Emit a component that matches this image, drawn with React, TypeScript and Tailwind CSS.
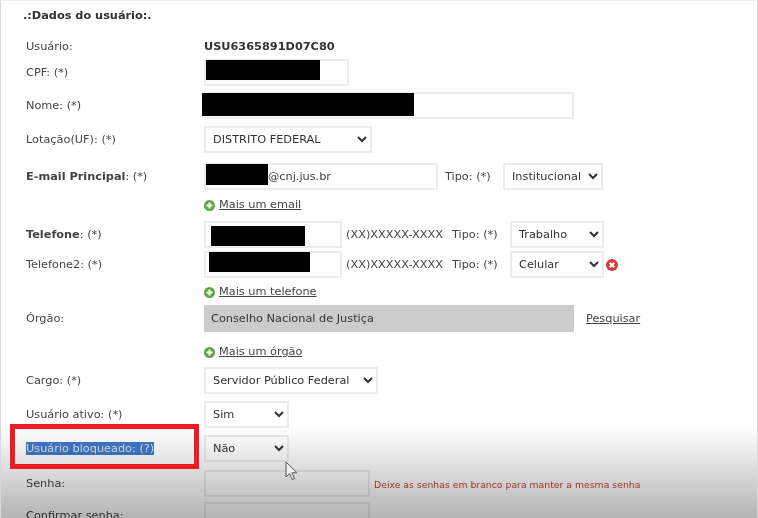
import type { ReactNode } from "react";

const fieldBorder = "border-2 border-[#ececec]";

function Row({ label, className, children }: { label?: ReactNode; className: string; children?: ReactNode }) {
  return (
    <div className={`flex items-center ${className}`}>
      <div className="w-[178px] shrink-0 pt-[2px]">{label}</div>
      {children}
    </div>
  );
}

function Field({ className, children }: { className: string; children?: ReactNode }) {
  return <div className={`relative h-[27px] ${fieldBorder} ${className}`}>{children}</div>;
}

function Select({ value, className }: { value: string; className: string }) {
  return (
    <select
      defaultValue={value}
      className={`h-[27px] ${fieldBorder} bg-white pl-[3px] text-[#333] ${className}`}
    >
      <option>{value}</option>
    </select>
  );
}

function AddLink({ text }: { text: string }) {
  return (
    <span className="flex items-center gap-[4px]">
      <svg width="11" height="11" viewBox="0 0 11 11">
        <circle cx="5.5" cy="5.5" r="5.5" fill="#5da642" />
        <path d="M5.5 2.5v6M2.5 5.5h6" stroke="#fff" strokeWidth="2" />
      </svg>
      <span className="underline">{text}</span>
    </span>
  );
}

const Mask = ({ className }: { className: string }) => <div className={`absolute bg-black ${className}`} />;

export default function App() {
  return (
    <div className="relative h-[518px] w-[758px] overflow-hidden border-x border-t border-x-[#d8d8d8] border-t-[#eef0f5] bg-white font-['DejaVu_Sans',sans-serif] text-[11.3px] text-[#444] blur-[0.3px]">
      <h2 className="ml-[22px] h-[31px] pt-[7px] font-bold leading-[16px] text-[#333]">.:Dados do usuário:.</h2>

      <div className="pl-[25px]">
        <Row label="Usuário:" className="mt-[4px] h-[20px]">
          <b className="pt-[2px] text-[#333]">USU6365891D07C80</b>
        </Row>
        <Row label="CPF: (*)" className="mt-[3px] h-[27px]">
          <Field className="w-[145px]">
            <Mask className="left-0 top-[-1px] h-[20px] w-[114px]" />
          </Field>
        </Row>
        <Row label="Nome: (*)" className="mt-[6px] h-[27px]">
          <Field className="w-[370px]">
            <Mask className="left-[-4px] top-[-1px] h-[23px] w-[212px]" />
          </Field>
        </Row>
        <Row label="Lotação(UF): (*)" className="mt-[7px] h-[27px]">
          <Select value="DISTRITO FEDERAL" className="w-[168px]" />
        </Row>
        <Row label={<><b>E-mail Principal</b>: (*)</>} className="mt-[10px] h-[27px]">
          <Field className="flex w-[234px] items-center pl-[62px]">
            <Mask className="left-0 top-[-1px] h-[21px] w-[62px]" />
            <span className="pt-[1px]">@cnj.jus.br</span>
          </Field>
          <span className="ml-[7px] w-[58px] pt-[2px]">Tipo: (*)</span>
          <Select value="Institucional" className="w-[100px]" />
        </Row>
        <Row className="mt-[6px] h-[18px]">
          <AddLink text="Mais um email" />
        </Row>
        <Row label={<><b>Telefone</b>: (*)</>} className="mt-[7px] h-[27px]">
          <Field className="w-[138px]">
            <Mask className="left-[5px] top-[3px] h-[20px] w-[94px]" />
          </Field>
          <span className="ml-[4px] w-[106px] pt-[2px]">(XX)XXXXX-XXXX</span>
          <span className="w-[58px] pt-[2px]">Tipo: (*)</span>
          <Select value="Trabalho" className="w-[94px]" />
        </Row>
        <Row label="Telefone2: (*)" className="mt-[3px] h-[27px]">
          <Field className="w-[138px]">
            <Mask className="left-[3px] top-[-1px] h-[20px] w-[101px]" />
          </Field>
          <span className="ml-[4px] w-[106px] pt-[2px]">(XX)XXXXX-XXXX</span>
          <span className="w-[58px] pt-[2px]">Tipo: (*)</span>
          <Select value="Celular" className="w-[94px]" />
          <svg className="ml-[2px]" width="12" height="12" viewBox="0 0 12 12">
            <circle cx="6" cy="6" r="6" fill="#d8383a" />
            <path d="M3.7 3.7l4.6 4.6M8.3 3.7l-4.6 4.6" stroke="#fff" strokeWidth="2" />
          </svg>
        </Row>
        <Row className="mt-[5px] h-[18px]">
          <AddLink text="Mais um telefone" />
        </Row>
        <Row label="Órgão:" className="mt-[4px] h-[27px]">
          <div className="flex h-[27px] w-[370px] items-center bg-[#cccccc] pl-[7px] pt-[2px] text-[#333]">
            Conselho Nacional de Justiça
          </div>
          <span className="ml-[12px] pt-[2px] underline">Pesquisar</span>
        </Row>
        <Row className="mt-[11px] h-[18px]">
          <AddLink text="Mais um órgão" />
        </Row>
        <Row label="Cargo: (*)" className="mt-[6px] h-[27px]">
          <Select value="Servidor Público Federal" className="w-[174px]" />
        </Row>
        <Row label="Usuário ativo: (*)" className="mt-[7px] h-[27px]">
          <Select value="Sim" className="w-[85px]" />
        </Row>
        <Row
          label={<span className="bg-[#3f78c8] text-[#d9e2ee]">Usuário bloqueado: (?)</span>}
          className="mt-[7px] h-[27px]"
        >
          <Select value="Não" className="w-[85px]" />
        </Row>
        <Row label="Senha:" className="mt-[8px] h-[27px]">
          <Field className="w-[166px]" />
          <span className="ml-[4px] pt-[2px] text-[9.3px] text-[#c8402f]">Deixe as senhas em branco para manter a mesma senha</span>
        </Row>
        <Row label="Confirmar senha:" className="mt-[5px] h-[27px]">
          <Field className="w-[166px]" />
        </Row>
      </div>

      {/* video fade over the bottom of the page */}
      <div className="pointer-events-none absolute inset-x-0 bottom-0 h-[90px] bg-gradient-to-b from-white to-[#b4b4b4] mix-blend-multiply" />
      {/* annotation box */}
      <div className="absolute left-[9px] top-[423px] h-[45px] w-[189px] border-[5px] border-[#ed1c24]" />
      <svg className="absolute left-[284px] top-[460px]" width="13" height="20" viewBox="0 0 13 20">
        <path d="M1 1v15l3.6-3.4 2.6 6 2.4-1-2.6-5.8H12z" fill="#eee" stroke="#555" strokeWidth="1" />
      </svg>
    </div>
  );
}
